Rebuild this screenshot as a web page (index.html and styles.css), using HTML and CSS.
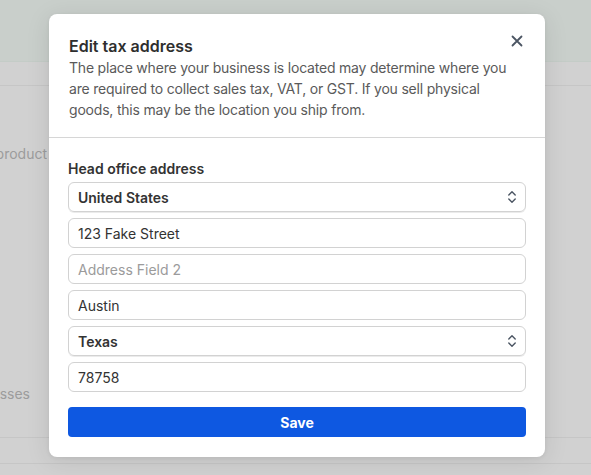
FILE: index.html
```html
<!DOCTYPE html>
<html lang="en">
<head>
<meta charset="utf-8">
<title>Edit tax address</title>
<link rel="stylesheet" href="styles.css">
</head>
<body>
<div class="page">
  <div class="topbar"></div>
  <div class="subbar"></div>
  <div class="content">
    <div class="bg-col">
      <div class="bg-text bg-text-1">Tax on digital product</div>
      <div class="bg-text bg-text-2">Tax addresses</div>
    </div>
  </div>
  <div class="foot1"></div>
  <div class="foot2"></div>
</div>

<div class="modal" role="dialog" aria-labelledby="mtitle">
  <div class="modal-head">
    <h2 id="mtitle" class="title">Edit tax address</h2>
    <p class="desc">The place where your business is located may determine where you are required to collect sales tax, VAT, or GST. If you sell physical goods, this may be the location you ship from.</p>
    <button class="close" aria-label="Close">
      <svg width="12" height="12" viewBox="0 0 12 12"><path d="M1.5 1.5 L10.5 10.5 M10.5 1.5 L1.5 10.5" stroke="#4b5563" stroke-width="1.8" stroke-linecap="round" fill="none"/></svg>
    </button>
  </div>
  <div class="modal-body">
    <div class="label">Head office address</div>
    <div class="fields">
      <div class="field select"><span>United States</span><svg class="chev" width="10" height="14" viewBox="0 0 10 14"><path d="M1.8 5 L5 1.8 L8.2 5 M1.8 9 L5 12.2 L8.2 9" stroke="#4b5563" stroke-width="1.4" fill="none" stroke-linecap="round" stroke-linejoin="round"/></svg></div>
      <div class="field">123 Fake Street</div>
      <div class="field placeholder">Address Field 2</div>
      <div class="field">Austin</div>
      <div class="field select"><span>Texas</span><svg class="chev" width="10" height="14" viewBox="0 0 10 14"><path d="M1.8 5 L5 1.8 L8.2 5 M1.8 9 L5 12.2 L8.2 9" stroke="#4b5563" stroke-width="1.4" fill="none" stroke-linecap="round" stroke-linejoin="round"/></svg></div>
      <div class="field">78758</div>
    </div>
    <button class="save">Save</button>
  </div>
</div>
</body>
</html>
```

FILE: styles.css
```css
* { box-sizing: border-box; }
html, body { margin: 0; padding: 0; }
body {
  width: 591px;
  height: 475px;
  overflow: hidden;
  font-family: Inter, "Noto Sans", "Liberation Sans", sans-serif;
  background: #d1d1d1;
  position: relative;
}
.page {
  display: flex;
  flex-direction: column;
  height: 475px;
}
.topbar {
  height: 62px;
  background: #c9cfcb;
  border-bottom: 1px solid #c4ccc7;
}
.subbar {
  height: 24px;
  border-bottom: 1px solid #c6c6c6;
}
.content {
  height: 351px;
  display: flex;
}
.bg-col {
  width: 47px;
  display: flex;
  flex-direction: column;
  overflow: hidden;
}
.bg-text {
  font-size: 14px;
  color: #9c9c9c;
  white-space: nowrap;
  direction: rtl;
  text-align: right;
  line-height: 20px;
}
.bg-text-1 { margin-top: 58px; }
.bg-text-2 { margin-top: 220px; width: 30px; }
.foot1 {
  height: 26px;
  border-top: 1px solid #c6c6c6;
}
.foot2 {
  border-top: 1px solid #c6c6c6;
  flex: 1;
}

.modal {
  position: absolute;
  left: 49px;
  top: 14px;
  width: 496px;
  height: 443px;
  background: #fff;
  border-radius: 8px;
  box-shadow: 0 4px 24px rgba(0,0,0,0.10), 0 1px 4px rgba(0,0,0,0.06);
}
.modal-head {
  position: relative;
  padding: 22px 20px 17px 20px;
  border-bottom: 1px solid #d6d6d6;
}
.title {
  margin: 0;
  font-size: 16px;
  line-height: 20px;
  font-weight: 600;
  color: #2e2e2e;
}
.desc {
  margin: 1px 0 0 0;
  font-size: 14px;
  line-height: 21px;
  letter-spacing: -0.2px;
  color: #5a5a5a;
}
.close {
  position: absolute;
  top: 20px;
  right: 21px;
  width: 14px;
  height: 14px;
  padding: 0;
  border: 0;
  background: none;
  display: flex;
  align-items: center;
  justify-content: center;
}
.modal-body {
  padding: 21px 19px 20px 19px;
  display: flex;
  flex-direction: column;
}
.label {
  font-size: 14px;
  line-height: 20px;
  font-weight: 600;
  color: #333;
  margin-bottom: 3px;
}
.fields {
  display: flex;
  flex-direction: column;
  gap: 6px;
}
.field {
  height: 30px;
  border: 1px solid #d2d2d2;
  border-radius: 6px;
  padding: 0 9px;
  font-size: 14px;
  color: #333;
  display: flex;
  align-items: center;
  justify-content: space-between;
}
.field.select {
  font-weight: 600;
  box-shadow: 0 1px 0 rgba(0,0,0,0.08);
}
.field.placeholder { color: #9b9b9b; }
.chev { margin-right: -1px; }
.save {
  margin-top: 15px;
  height: 30px;
  width: 100%;
  border: 0;
  border-radius: 4px;
  background: #0e58e1;
  color: #fff;
  font-family: inherit;
  font-size: 14px;
  font-weight: 700;
}
```
